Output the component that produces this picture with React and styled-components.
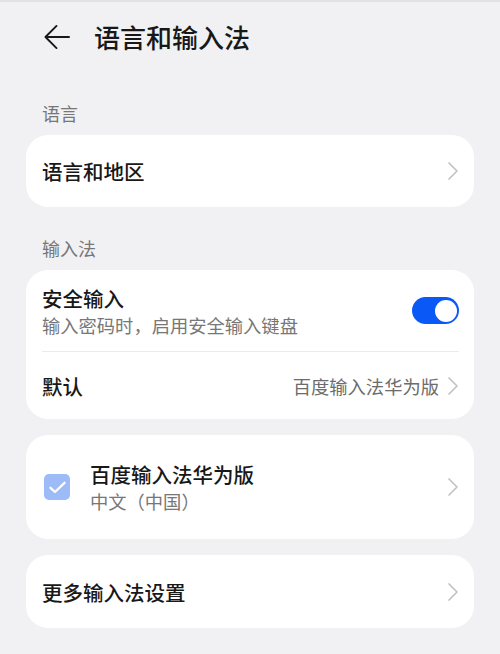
import React from "react";
import styled, { createGlobalStyle } from "styled-components";

const colors = {
  bg: "#f1f1f3",
  card: "#ffffff",
  text: "#181818",
  sub: "#777777",
  value: "#6c6c6c",
  chevron: "#c2c2c2",
  divider: "#ebebeb",
  blue: "#0a59f7",
  check: "#9dbbf6",
};

const GlobalStyle = createGlobalStyle`
  html, body {
    margin: 0;
    padding: 0;
    background: ${colors.bg};
  }
  body {
    font-family: "Noto Sans CJK SC", "Noto Sans", sans-serif;
    color: ${colors.text};
    -webkit-font-smoothing: antialiased;
  }
`;

const Page = styled.div`
  width: 500px;
  min-height: 654px;
  background: ${colors.bg};
  border-top: 2px solid #e2e2e4;
  box-sizing: border-box;
`;

const Header = styled.header`
  display: flex;
  align-items: center;
  height: 70px;
  padding-left: 44px;
  gap: 24px;
`;

const BackButton = styled.button`
  display: flex;
  align-items: center;
  justify-content: center;
  width: 26px;
  height: 26px;
  padding: 0;
  border: none;
  background: transparent;
  color: ${colors.text};
`;

const Title = styled.h1`
  margin: 0;
  font-size: 26px;
  font-weight: 500;
  line-height: 34px;
`;

const SectionLabel = styled.div`
  padding: 29px 42px 10px;
  font-size: 18px;
  line-height: 24px;
  color: ${colors.sub};
`;

const Card = styled.section`
  margin: 0 26px ${(p) => (p.$gap ? "16px" : "0")};
  background: ${colors.card};
  border-radius: 22px;
  overflow: hidden;
`;

const Row = styled.div`
  display: flex;
  align-items: center;
  min-height: ${(p) => p.$height || 72}px;
  padding: 0 15px 0 ${(p) => p.$left || 16}px;
  gap: ${(p) => p.$gap || 12}px;
  box-sizing: border-box;
`;

const RowMain = styled.div`
  flex: 1;
  display: flex;
  flex-direction: column;
  min-width: 0;
`;

const ItemTitle = styled.div`
  font-size: 20.5px;
  font-weight: 500;
  line-height: 26px;
`;

const ItemSub = styled.div`
  margin-top: 2px;
  font-size: 18.3px;
  line-height: 24px;
  color: ${colors.sub};
`;

const Value = styled.span`
  font-size: 18.3px;
  line-height: 24px;
  color: ${colors.value};
`;

const Divider = styled.div`
  height: 1px;
  margin: 0 15px 0 16px;
  background: ${colors.divider};
`;

const Toggle = styled.div`
  display: flex;
  align-items: center;
  justify-content: ${(p) => (p.$on ? "flex-end" : "flex-start")};
  width: 47px;
  height: 27px;
  padding: 0 2.5px;
  box-sizing: border-box;
  border-radius: 14px;
  background: ${(p) => (p.$on ? colors.blue : "#d6d6d6")};
  &::after {
    content: "";
    width: 22px;
    height: 22px;
    border-radius: 50%;
    background: #fff;
  }
`;

const CheckBox = styled.div`
  display: flex;
  align-items: center;
  justify-content: center;
  width: 26px;
  height: 26px;
  border-radius: 5px;
  background: ${colors.check};
  flex-shrink: 0;
`;

const BackArrow = () => (
  <svg width="27" height="26" viewBox="0 0 27 26" fill="none">
    <path
      d="M26 13H2M13 1.5L1.5 13L13 24.5"
      stroke="currentColor"
      strokeWidth="2"
      strokeLinecap="round"
      strokeLinejoin="round"
    />
  </svg>
);

const Chevron = () => (
  <svg width="12" height="20" viewBox="0 0 12 20" fill="none">
    <path
      d="M2 2L10 10L2 18"
      stroke={colors.chevron}
      strokeWidth="1.7"
      strokeLinecap="round"
      strokeLinejoin="round"
    />
  </svg>
);

const Check = () => (
  <svg width="17" height="13" viewBox="0 0 17 13" fill="none">
    <path
      d="M1.5 6.8L6 11L15.5 1.8"
      stroke="#fff"
      strokeWidth="2.3"
      strokeLinecap="round"
      strokeLinejoin="round"
    />
  </svg>
);

const App = () => {
  return (
    <Page>
      <GlobalStyle />
      <Header>
        <BackButton aria-label="返回">
          <BackArrow />
        </BackButton>
        <Title>语言和输入法</Title>
      </Header>

      <SectionLabel>语言</SectionLabel>
      <Card>
        <Row $height={72}>
          <RowMain>
            <ItemTitle>语言和地区</ItemTitle>
          </RowMain>
          <Chevron />
        </Row>
      </Card>

      <SectionLabel>输入法</SectionLabel>
      <Card $gap>
        <Row $height={81}>
          <RowMain>
            <ItemTitle>安全输入</ItemTitle>
            <ItemSub>输入密码时，启用安全输入键盘</ItemSub>
          </RowMain>
          <Toggle $on />
        </Row>
        <Divider />
        <Row $height={67} $gap={8}>
          <RowMain>
            <ItemTitle>默认</ItemTitle>
          </RowMain>
          <Value>百度输入法华为版</Value>
          <Chevron />
        </Row>
      </Card>

      <Card $gap>
        <Row $height={104} $left={18} $gap={20}>
          <CheckBox>
            <Check />
          </CheckBox>
          <RowMain>
            <ItemTitle>百度输入法华为版</ItemTitle>
            <ItemSub>中文（中国）</ItemSub>
          </RowMain>
          <Chevron />
        </Row>
      </Card>

      <Card>
        <Row $height={73}>
          <RowMain>
            <ItemTitle>更多输入法设置</ItemTitle>
          </RowMain>
          <Chevron />
        </Row>
      </Card>
    </Page>
  );
};

export default App;
